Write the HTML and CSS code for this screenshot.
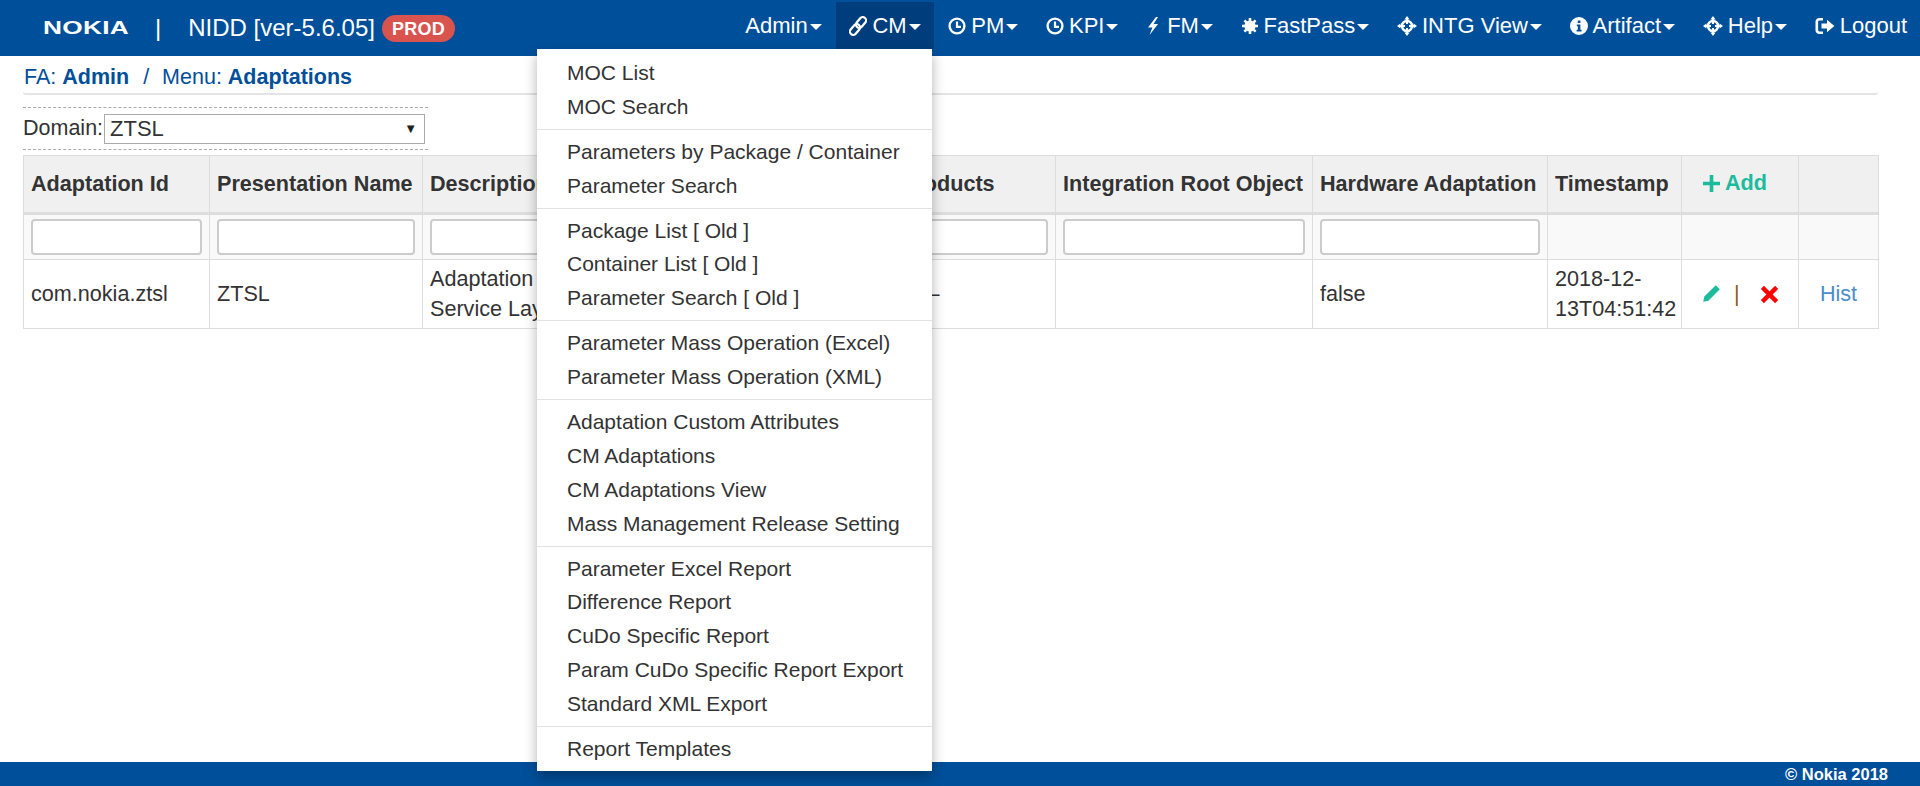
FILE: index.html
```html
<!DOCTYPE html>
<html lang="en">

<head>
    <meta charset="utf-8">
    <meta name="viewport" content="width=device-width, initial-scale=1.0">
    <title>NIDD - Adaptations</title>
    <link rel="stylesheet" href="styles.css">
</head>

<body>
    <svg class="sprite" width="0" height="0">
        <symbol id="i-link" viewBox="0 0 18 20">
            <g fill="none" stroke="currentColor" stroke-width="2.2">
                <rect x="0" y="10.2" width="12" height="6.6" rx="3.2" transform="rotate(-50 6 13.5)" />
                <rect x="6" y="3.2" width="12" height="6.6" rx="3.2" transform="rotate(-50 12 6.5)" />
            </g>
        </symbol>
        <symbol id="i-clock" viewBox="0 0 18 18">
            <circle cx="9" cy="9" r="7.4" fill="none" stroke="currentColor" stroke-width="2.4" />
            <path d="M9 4.5V9.8H13" fill="none" stroke="currentColor" stroke-width="2.2" />
        </symbol>
        <symbol id="i-flash" viewBox="0 0 14 20">
            <path d="M10 1 2 11.5H6.4L3.6 19 12 8H7.6L12 1Z" fill="currentColor" />
        </symbol>
        <symbol id="i-asterisk" viewBox="0 0 18 18">
            <circle cx="9" cy="9" r="5.6" fill="currentColor" />
            <path d="M9 1V17M1 9H17M3.4 3.4 14.6 14.6M14.6 3.4 3.4 14.6" stroke="currentColor" stroke-width="2.6" />
        </symbol>
        <symbol id="i-target" viewBox="0 0 20 20">
            <circle cx="10" cy="10" r="5" fill="none" stroke="currentColor" stroke-width="2.6" />
            <path d="M10 0 12.6 3.4H7.4ZM10 20 7.4 16.6H12.6ZM0 10 3.4 7.4V12.6ZM20 10 16.6 12.6V7.4Z" fill="currentColor" />
            <path d="M10 3V8M10 12V17M3 10H8M12 10H17" stroke="currentColor" stroke-width="2" />
        </symbol>
        <symbol id="i-info" viewBox="0 0 18 18">
            <path fill-rule="evenodd" fill="currentColor" d="M9 0a9 9 0 1 0 0 18A9 9 0 0 0 9 0ZM7.8 3.6h2.6v2.4H7.8ZM6.8 7.6h3.6v5.2h1.2v1.6H6.6v-1.6h1.2V9.2h-1Z" />
        </symbol>
        <symbol id="i-logout" viewBox="0 0 20 18">
            <path d="M8 2.2H4.4A2.6 2.6 0 0 0 1.8 4.8V13.2A2.6 2.6 0 0 0 4.4 15.8H8" fill="none" stroke="currentColor" stroke-width="2.6" />
            <path d="M6.5 6.6H12V2.8L19.4 9 12 15.2V11.4H6.5Z" fill="currentColor" />
        </symbol>
    </svg>

    <header class="topbar">
        <div class="brand">
            <span class="logo">NOKIA</span>
            <span class="brand-sep">|</span>
            <span class="app-name">NIDD [ver-5.6.05]</span>
            <span class="badge">PROD</span>
        </div>
        <nav class="menu">
            <a class="menu-item" href="#">Admin<b class="caret"></b></a>
            <a class="menu-item open" href="#"><svg class="ico ico-link"><use href="#i-link" /></svg>CM<b class="caret"></b></a>
            <a class="menu-item" href="#"><svg class="ico"><use href="#i-clock" /></svg>PM<b class="caret"></b></a>
            <a class="menu-item" href="#"><svg class="ico"><use href="#i-clock" /></svg>KPI<b class="caret"></b></a>
            <a class="menu-item" href="#"><svg class="ico ico-flash"><use href="#i-flash" /></svg>FM<b class="caret"></b></a>
            <a class="menu-item" href="#"><svg class="ico"><use href="#i-asterisk" /></svg>FastPass<b class="caret"></b></a>
            <a class="menu-item" href="#"><svg class="ico ico-target"><use href="#i-target" /></svg>INTG View<b class="caret"></b></a>
            <a class="menu-item" href="#"><svg class="ico"><use href="#i-info" /></svg>Artifact<b class="caret"></b></a>
            <a class="menu-item" href="#"><svg class="ico ico-target"><use href="#i-target" /></svg>Help<b class="caret"></b></a>
            <a class="menu-item" href="#"><svg class="ico ico-logout"><use href="#i-logout" /></svg>Logout</a>
        </nav>
    </header>

    <ul class="dropdown">
        <li><a href="#">MOC List</a></li>
        <li><a href="#">MOC Search</a></li>
        <li class="divider"></li>
        <li><a href="#">Parameters by Package / Container</a></li>
        <li><a href="#">Parameter Search</a></li>
        <li class="divider"></li>
        <li><a href="#">Package List [ Old ]</a></li>
        <li><a href="#">Container List [ Old ]</a></li>
        <li><a href="#">Parameter Search [ Old ]</a></li>
        <li class="divider"></li>
        <li><a href="#">Parameter Mass Operation (Excel)</a></li>
        <li><a href="#">Parameter Mass Operation (XML)</a></li>
        <li class="divider"></li>
        <li><a href="#">Adaptation Custom Attributes</a></li>
        <li><a href="#">CM Adaptations</a></li>
        <li><a href="#">CM Adaptations View</a></li>
        <li><a href="#">Mass Management Release Setting</a></li>
        <li class="divider"></li>
        <li><a href="#">Parameter Excel Report</a></li>
        <li><a href="#">Difference Report</a></li>
        <li><a href="#">CuDo Specific Report</a></li>
        <li><a href="#">Param CuDo Specific Report Export</a></li>
        <li><a href="#">Standard XML Export</a></li>
        <li class="divider"></li>
        <li><a href="#">Report Templates</a></li>
    </ul>

    <main class="content">
        <div class="crumbs">FA: <b>Admin</b><span class="crumb-sep">/</span>Menu: <b>Adaptations</b></div>

        <div class="domain">
            <label for="domain">Domain:</label>
            <span class="select-wrap">
                <select id="domain">
                    <option>ZTSL</option>
                </select>
            </span>
        </div>

        <table class="grid">
            <colgroup>
                <col class="c-id">
                <col class="c-name">
                <col class="c-desc">
                <col class="c-prod">
                <col class="c-root">
                <col class="c-hw">
                <col class="c-time">
                <col class="c-act">
                <col class="c-hist">
            </colgroup>
            <thead>
                <tr>
                    <th>Adaptation Id</th>
                    <th>Presentation Name</th>
                    <th>Description</th>
                    <th>Products</th>
                    <th>Integration Root Object</th>
                    <th>Hardware Adaptation</th>
                    <th>Timestamp</th>
                    <th class="add-cell">
                        <a class="add" href="#"><svg class="plus" viewBox="0 0 14 14"><path d="M7 0V14M0 7H14" stroke="currentColor" stroke-width="3" /></svg>Add</a>
                    </th>
                    <th></th>
                </tr>
            </thead>
            <tbody>
                <tr class="filters">
                    <td><input type="text"></td>
                    <td><input type="text"></td>
                    <td><input type="text"></td>
                    <td><input type="text"></td>
                    <td><input type="text"></td>
                    <td><input type="text"></td>
                    <td></td>
                    <td></td>
                    <td></td>
                </tr>
                <tr>
                    <td>com.nokia.ztsl</td>
                    <td>ZTSL</td>
                    <td>Adaptation for ZTSL<br>Service Layer</td>
                    <td>ZT–</td>
                    <td></td>
                    <td>false</td>
                    <td>2018-12-13T04:51:42</td>
                    <td class="actions">
                        <svg class="pencil" viewBox="0 0 16 16"><path d="M11.6 1 15 4.4 5.4 14 1 15 2 10.6Z" fill="currentColor" /></svg>
                        <span class="action-sep">|</span>
                        <svg class="cross" viewBox="0 0 16 16"><path d="M2 2 14 14M14 2 2 14" stroke="currentColor" stroke-width="3.6" /></svg>
                    </td>
                    <td class="hist"><a href="#">Hist</a></td>
                </tr>
            </tbody>
        </table>
    </main>

    <footer class="bottombar">© Nokia 2018</footer>
</body>

</html>
```

FILE: styles.css
```css
* {
    box-sizing: border-box;
}

body {
    margin: 0;
    height: 100vh;
    overflow: hidden;
    display: flex;
    flex-direction: column;
    font-family: "Liberation Sans", Arial, sans-serif;
    font-size: 21.6px;
    color: #333;
    background-color: #fff;
}

a {
    text-decoration: none;
}

.sprite {
    display: block;
    position: absolute;
}

/* top bar */
.topbar {
    display: flex;
    justify-content: space-between;
    height: 56px;
    flex-shrink: 0;
    padding-right: 13px;
    background-color: #004f9a;
    color: #fff;
}

.brand {
    display: flex;
    align-items: center;
    padding-left: 43px;
}

.logo {
    display: inline-block;
    width: 86px;
    font-size: 18px;
    font-weight: bold;
    letter-spacing: 0.2px;
    transform: scaleX(1.46);
    transform-origin: left center;
}

.brand-sep {
    margin-left: 26px;
    font-size: 24px;
}

.app-name {
    margin-left: 27px;
    font-size: 24px;
}

.badge {
    margin-left: 7px;
    padding: 0 10px;
    height: 27px;
    line-height: 28px;
    border-radius: 14px;
    background-color: #d9534f;
    font-size: 18px;
    font-weight: bold;
    letter-spacing: 0.3px;
}

.menu {
    display: flex;
    height: 49px;
    margin-top: 2px;
}

.menu-item {
    display: flex;
    align-items: center;
    height: 47px;
    padding: 0 13.85px;
    color: #fff;
    font-size: 22px;
}

.menu-item.open {
    background-color: #003d7c;
}

.menu-item:last-child {
    padding-right: 0;
}

.caret {
    width: 0;
    height: 0;
    margin-left: 2px;
    margin-top: 2px;
    border-top: 6px solid #fff;
    border-left: 6px solid transparent;
    border-right: 6px solid transparent;
}

.ico {
    width: 18px;
    height: 18px;
    margin-right: 5px;
}

.ico-link {
    height: 20px;
}

.ico-flash {
    width: 14px;
    height: 20px;
    margin-right: 7px;
}

.ico-target {
    width: 20px;
    height: 20px;
}

.ico-logout {
    width: 20px;
}

/* CM dropdown */
.dropdown {
    position: absolute;
    top: 49px;
    left: 537px;
    z-index: 10;
    width: 395px;
    margin: 0;
    padding: 7px 0 5px;
    list-style: none;
    background-color: #fff;
    box-shadow: 0 6px 12px rgba(0, 0, 0, 0.3);
    font-size: 21px;
}

.dropdown a {
    display: block;
    height: 33.9px;
    line-height: 34px;
    padding-left: 30px;
    color: #333;
}

.divider {
    height: 1px;
    margin: 5px 0;
    background-color: #e2e2e2;
}

/* page */
.content {
    flex: 1;
    padding: 0 42px 0 23px;
}

.crumbs {
    height: 39px;
    padding: 8px 0 0 1px;
    line-height: 26px;
    border-bottom: 2px solid #e4e4e4;
    border-radius: 0 0 3px 3px;
    font-size: 21.5px;
    color: #004f9a;
}

.crumb-sep {
    margin: 0 13px 0 14px;
}

.domain {
    display: flex;
    align-items: center;
    width: 405px;
    height: 43px;
    margin-top: 12px;
    border-top: 1px dashed #aaa;
    border-bottom: 1px dashed #aaa;
    font-size: 21.5px;
}

.select-wrap {
    position: relative;
    margin-left: 1px;
}

.select-wrap::after {
    content: "▼";
    position: absolute;
    top: 7px;
    right: 8px;
    font-size: 13px;
    color: #222;
    pointer-events: none;
}

select {
    display: block;
    width: 321px;
    height: 30px;
    padding: 0 5px;
    appearance: none;
    border: 1px solid #aaa;
    border-radius: 0;
    background-color: #fff;
    font-family: inherit;
    font-size: 22px;
    color: #333;
}

/* table */
.grid {
    table-layout: fixed;
    width: 1855px;
    margin-top: 5px;
    border-collapse: collapse;
}

.c-id { width: 186px; }
.c-name { width: 213px; }
.c-desc { width: 471px; }
.c-prod { width: 162px; }
.c-root { width: 257px; }
.c-hw { width: 235px; }
.c-time { width: 134px; }
.c-act { width: 117px; }
.c-hist { width: 80px; }

.grid th,
.grid td {
    padding: 4px 7px;
    border: 1px solid #ddd;
    line-height: 30px;
    text-align: left;
}

.grid th {
    height: 58px;
    padding: 8px 7px;
    border-bottom-width: 3px;
    background-color: #f0f0f0;
    white-space: nowrap;
}

.grid td {
    vertical-align: middle;
}

.filters td {
    height: 44px;
    background-color: #f9f9f9;
}

.filters input {
    display: block;
    width: 100%;
    height: 36px;
    border: 2px solid #ccc;
    border-radius: 4px;
    background-color: #fff;
}

.grid td:nth-child(7) {
    padding-right: 0;
}

.add-cell {
    padding-right: 17px !important;
    text-align: center !important;
}

.add {
    display: inline-flex;
    align-items: center;
    color: #1abc9c;
}

.plus {
    width: 17px;
    height: 17px;
    margin-right: 5px;
}

.actions {
    padding-left: 20px !important;
    white-space: nowrap;
}

.pencil {
    width: 19px;
    height: 19px;
    color: #1abc9c;
    vertical-align: -2px;
}

.action-sep {
    margin: 0 14px 0 7px;
    color: #8a5a2a;
}

.cross {
    width: 19px;
    height: 19px;
    color: #f00;
    vertical-align: -3px;
}

.hist {
    text-align: center !important;
}

.hist a {
    color: #4a8ccb;
}

/* footer */
.bottombar {
    flex-shrink: 0;
    height: 24px;
    padding-right: 32px;
    line-height: 24px;
    text-align: right;
    font-size: 16.5px;
    font-weight: bold;
    color: #fff;
    background-color: #004f9a;
}
```
